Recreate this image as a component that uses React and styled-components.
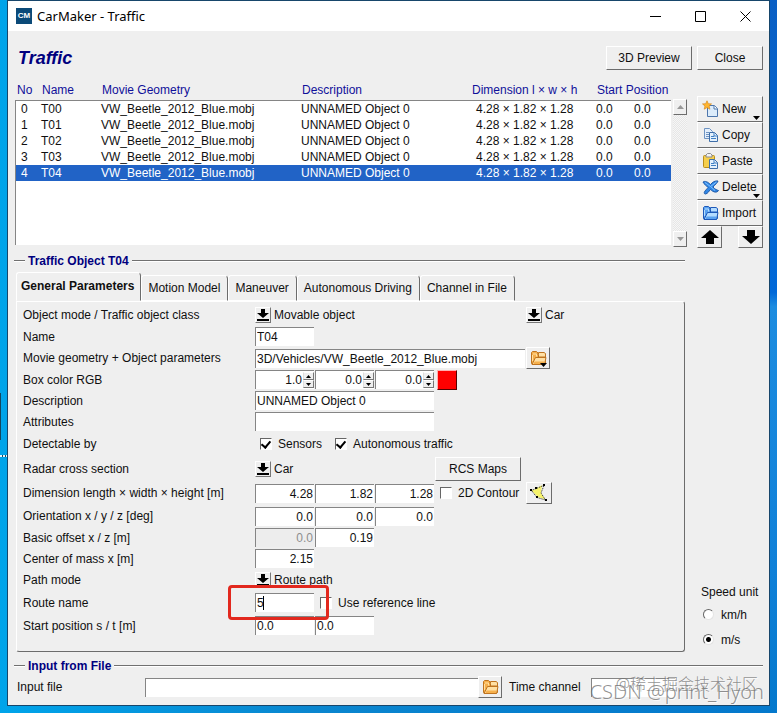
import React, { useState } from "react";
import styled, { createGlobalStyle } from "styled-components";

const GlobalStyle = createGlobalStyle`
  * {
    box-sizing: border-box;
  }
  body {
    margin: 0;
    font-family: "Liberation Sans", Arial, sans-serif;
    font-size: 12px;
    line-height: 14px;
    color: #101010;
  }
  button, input, select {
    font: inherit;
    color: inherit;
    margin: 0;
  }
`;
const Desktop = styled.div`
  position: relative;
  min-height: 100vh;
  display: flex;
  padding: 0 7px 7px;
  background: linear-gradient(
      180deg,
      #0a5fc4 0%,
      #0068d8 41%,
      #1c8ce0 43%,
      #0f80d8 80%,
      #0478cc 100%
    )
    right / 8px 100% no-repeat,
    linear-gradient(90deg, #00a4ea 0%, #0a86cf 40%, #0478cc 100%);
`;
const DesktopIcon = styled.div`
  position: absolute;
  left: 0;
  top: 393px;
  width: 1px;
  height: 47px;
  background: #14465f;
  &::after {
    content: "";
    position: absolute;
    left: 0;
    top: 62px;
    width: 7px;
    height: 2px;
    background: repeating-linear-gradient(90deg, #e8f4fa 0 2px, #14465f 2px 3px);
  }
`;
const Window = styled.div`
  position: relative;
  flex: 1;
  min-width: 0;
  border: 1px solid #17466b;
  background: #efefef;
`;
const TitleBar = styled.div`
  display: flex;
  align-items: center;
  height: 30px;
  padding: 0 8px;
  background: #fff;
  color: #000;
  font-family: "Noto Sans", "Open Sans", sans-serif;
  font-size: 13px;
`;
const AppIcon = styled.span`
  width: 16px;
  height: 16px;
  margin-right: 5px;
  background: #0b4a78;
  color: #fff;
  font: bold 8px/15px "Liberation Sans", Arial, sans-serif;
  text-align: center;
`;
const Caption = styled.span`
  flex: 1;
`;
const CaptionButton = styled.button`
  width: 45px;
  height: 30px;
  padding: 0;
  border: 0;
  background: none;
  display: grid;
  place-items: center;
`;
const CaptionButtons = styled.div`
  display: flex;
  margin-right: -7px;
`;
const Body = styled.div`
  padding: 0 6px 0 7px;
`;
const Header = styled.div`
  display: flex;
  align-items: center;
  gap: 5px;
  height: 53px;
`;
const Title = styled.h1`
  flex: 1;
  margin: 0;
  padding-left: 3px;
  color: #00007f;
  font-size: 18px;
  line-height: 20px;
  font-style: italic;
`;
const Button = styled.button`
  flex: none;
  display: flex;
  align-items: center;
  justify-content: center;
  width: ${(p) => p.$w}px;
  height: ${(p) => p.$h || 24}px;
  padding: 0;
  border: 1px solid;
  border-color: #fff #6c6c6c #6c6c6c #fff;
  background: #efefef;
  position: relative;
`;
const Columns = styled.div`
  display: flex;
  gap: 10px;
`;
const Main = styled.div`
  flex: 1;
  min-width: 0;
`;
const Side = styled.div`
  display: flex;
  flex-direction: column;
  width: 66px;
  padding-top: 12px;
`;
const ListArea = styled.div`
  display: flex;
  gap: 2px;
`;
const Table = styled.table`
  flex: 1;
  align-self: flex-start;
  table-layout: fixed;
  border-spacing: 0;
  th {
    height: 16px;
    padding: 0 0 4px 1px;
    color: #10109a;
    font-weight: normal;
    line-height: 12px;
    text-align: left;
    white-space: nowrap;
  }
  th:first-child {
    padding-left: 2px;
  }
  td {
    height: 16px;
    padding: 0;
    line-height: 16px;
    white-space: nowrap;
  }
  td:nth-child(5) {
    padding-left: 5px;
  }
  tbody tr:first-child td {
    height: 17px;
    border-top: 1px solid #858585;
  }
  tbody td:first-child {
    padding-left: 5px;
    border-left: 1px solid #858585;
  }
`;
const Tr = styled.tr`
  background: ${(p) => (p.$selected ? "#2163c6" : "#fff")};
  color: ${(p) => (p.$selected ? "#fff" : "#101010")};
`;
const Filler = styled.tr`
  background: #fff;
  && td {
    height: 64px;
  }
`;
const ScrollBar = styled.div`
  display: flex;
  flex-direction: column;
  justify-content: space-between;
  width: 14px;
  height: 148px;
  margin-top: 15px;
  background: repeating-conic-gradient(#e6e6e6 0 25%, #f6f6f6 0 50%) 0 0 / 2px
    2px;
`;
const ToolButton = styled(Button)`
  width: 100%;
  height: 26px;
  justify-content: flex-start;
  gap: 3px;
  padding-left: 4px;
`;
const MoreMark = styled.svg`
  position: absolute;
  right: 2px;
  bottom: 1px;
`;
const Arrows = styled.div`
  display: flex;
  justify-content: space-between;
`;
const SpeedUnit = styled.fieldset`
  margin: auto 0 0;
  padding: 0 0 0 4px;
  border: 0;
  white-space: nowrap;
  legend {
    padding: 0;
    line-height: 20px;
  }
`;
const RadioLabel = styled.label`
  display: flex;
  align-items: center;
  gap: 7px;
  height: 25px;
  padding-left: 2px;
`;
const Radio = styled.input`
  appearance: none;
  width: 11px;
  height: 11px;
  border: 1px solid;
  border-color: #666 #e4e4e4 #e4e4e4 #666;
  border-radius: 50%;
  background: #fff;
  &:checked {
    background: radial-gradient(#000 0 2px, #fff 3px);
  }
`;
const SectionTitle = styled.h2`
  display: flex;
  align-items: center;
  gap: 3px;
  height: 16px;
  margin: ${(p) => p.$top}px 0 0 -1px;
  color: #00007f;
  font-size: 12px;
  line-height: 16px;
  &::before,
  &::after {
    content: "";
    width: 11px;
    height: 1px;
    background: #707070;
    border-bottom: 1px solid #fff;
  }
  &::after {
    flex: 1;
    margin-right: ${(p) => p.$end || 0}px;
  }
`;
const Tabs = styled.div`
  display: flex;
  align-items: flex-end;
  height: 29px;
  margin-top: 3px;
  padding-left: 1px;
`;
const Tab = styled.button`
  height: ${(p) => (p.$active ? 29 : 26)}px;
  padding: ${(p) => (p.$active ? "0 6px 2px 4px" : "0 7px 0 6px")};
  border: 1px solid;
  border-color: #fff #6c6c6c ${(p) => (p.$active ? "#efefef" : "#fff")} #fff;
  border-radius: 3px 4px 0 0;
  background: #efefef;
  font-weight: ${(p) => (p.$active ? "bold" : "normal")};
  white-space: nowrap;
`;
const Panel = styled.div`
  margin: 0 2px 0 1px;
  padding: 2px 6px 15px;
  border: 1px solid;
  border-color: #fff #6c6c6c #6c6c6c #fff;
  border-radius: 0 3px 3px 3px;
`;
const Row = styled.div`
  display: flex;
  align-items: center;
  height: ${(p) => p.$h || 21}px;
`;
const RowLabel = styled.label`
  flex: none;
  width: 232px;
  white-space: nowrap;
`;
const Fields = styled.div`
  position: relative;
  display: flex;
  align-items: center;
  gap: 1px;
  flex: 1;
  min-width: 0;
`;
const Input = styled.input`
  width: ${(p) => p.$w || 59}px;
  height: 19px;
  padding: 0 1px;
  border: 0;
  border-top: 1px solid #858585;
  border-left: 1px solid #858585;
  border-radius: 0;
  outline: 0;
  background: #fff;
  text-align: ${(p) => (p.$num ? "right" : "left")};
  &:disabled {
    background: #ededed;
    color: #8e8e8e;
  }
`;
const GrowInput = styled(Input)`
  flex: 1;
  min-width: 0;
`;
const Spin = styled.div`
  display: flex;
  align-items: center;
  width: 59px;
  height: 19px;
  background: #fff;
  border-top: 1px solid #858585;
  border-left: 1px solid #858585;
  input {
    flex: 1;
    min-width: 0;
    height: 17px;
    border: 0;
    outline: 0;
    background: none;
  }
`;
const SpinButtons = styled.div`
  display: flex;
  flex-direction: column;
  button {
    display: grid;
    place-items: center;
    width: 11px;
    height: 8px;
    padding: 0;
    border: 1px solid;
    border-color: #fff #777 #777 #ddd;
    background: #efefef;
  }
`;
const Swatch = styled.button`
  width: 20px;
  height: 20px;
  margin-left: 2px;
  padding: 0;
  border: 1px solid;
  border-color: #ffb0b0 #500 #500 #ffb0b0;
  background: #f00;
`;
const Picker = styled.div`
  display: flex;
  align-items: center;
  gap: 3px;
  width: ${(p) => p.$w}px;
  select {
    appearance: none;
    padding: 0;
    border: 0;
    outline: 0;
    background: none;
  }
`;
const ArrowBox = styled.span`
  display: grid;
  place-items: center;
  width: 16px;
  height: 16px;
  border: 1px solid;
  border-color: #fff #777 #777 #fff;
`;
const CheckLabel = styled.label`
  display: flex;
  align-items: center;
  gap: 6px;
  margin: 0 ${(p) => p.$right || 0}px 0 ${(p) => p.$left}px;
  white-space: nowrap;
`;
const Check = styled.input`
  appearance: none;
  display: grid;
  place-items: center;
  width: 12px;
  height: 12px;
  border: 1px solid;
  border-color: #666 #fff #fff #666;
  background: #fff;
  &:checked::before {
    content: "";
    width: 4px;
    height: 7px;
    border: solid #000;
    border-width: 0 2px 2px 0;
    transform: translateY(-1px) rotate(40deg);
  }
`;
const Highlight = styled.div`
  position: absolute;
  z-index: 1;
  left: -27px;
  top: -8px;
  width: 101px;
  height: 35px;
  border: 3px solid #e2281e;
  border-radius: 4px;
  pointer-events: none;
`;
const Caret = styled.span`
  position: absolute;
  left: 8px;
  top: 3px;
  width: 1px;
  height: 14px;
  background: #000;
`;
const FileRow = styled.div`
  display: flex;
  align-items: center;
  height: 30px;
  padding: 0 88px 4px 2px;
  label {
    width: 128px;
  }
  label + input + button + label {
    width: 89px;
    padding-left: 7px;
    white-space: nowrap;
  }
`;
const Mark = styled.div`
  position: absolute;
  right: ${(p) => p.$right}px;
  bottom: ${(p) => p.$bottom}px;
  font-family: "Noto Sans", "Noto Sans CJK SC", sans-serif;
  font-size: ${(p) => p.$size}px;
  font-weight: 300;
  line-height: 24px;
  color: rgba(110, 110, 110, 0.75);
  text-shadow: 1px 1px 0 rgba(255, 255, 255, 0.7);
  white-space: nowrap;
  pointer-events: none;
`;

const NewIcon = () => (
  <svg width="17" height="18" viewBox="0 0 17 18">
    <path d="M5.5 5.5h7l3 3v8h-10z" fill="#dcecfb" stroke="#4d76ac" />
    <path d="M12 5.5v3.500h3.500" fill="#fff" stroke="#4d76ac" />
    <path
      d="M5 0.800l1.300 2.900 3.200.2-2.400 2.100.8 3.200L5 7.500 2.200 9.200 3 6 .5 3.900l3.200-.2z"
      fill="#ffb52e"
      stroke="#d98a1c"
      strokeWidth=".7"
    />
  </svg>
);
const CopyIcon = () => (
  <svg width="17" height="18" viewBox="0 0 17 18">
    <path d="M2.500 2.500h5l3 3v7h-8z" fill="#e4effb" stroke="#6e93c2" />
    <path d="M4 6.500h3M4 8.500h3M4 10.500h3" stroke="#6e93c2" />
    <path d="M7.500 6.500h5l3 3v6h-8z" fill="#e4f1fd" stroke="#3f6ea8" />
    <path d="M12 6.500v3.500h3.500M9 10.500h3M9 12.500h5" fill="none" stroke="#3f7fc4" />
  </svg>
);
const PasteIcon = () => (
  <svg width="17" height="18" viewBox="0 0 17 18">
    <rect x="1.500" y="3.500" width="11" height="12" rx="1" fill="#f6cf4c" stroke="#b98d1c" />
    <path d="M4 5V3l1.500-1.500h3L10 3v2z" fill="#f3f3f3" stroke="#8b8b8b" />
    <path d="M7.500 7.500h5l3 3v6h-8z" fill="#e4f1fd" stroke="#3f6ea8" />
    <path d="M12 7.500V11h3.500M9 11.500h3M9 13.500h5" fill="none" stroke="#3f7fc4" />
  </svg>
);
const DeleteIcon = () => (
  <svg width="17" height="18" viewBox="0 0 17 18">
    <path
      d="M1 4c2-1.500 5 0 7.500 2.500C10.500 4 13 2.500 16 3c-.5 2-3 3.500-5 6 2 2.500 4 3 5.500 3.500-1.500 2.500-5 2-8-1-2 2-2.500 4-5 4.500-1.500 0-1.500-1.500-1-2C3 12.500 5 11 6 9.500 4 7 2 6.500 1 4z"
      fill="#3187e6"
      stroke="#1f5aa8"
    />
    <path d="M3 4.500l5.500 4 6-4.500M8.500 8.500l4.500 4" fill="none" stroke="#7cc0ff" />
  </svg>
);
const FolderIcon = ({ dark, mid, light }) => (
  <svg width="17" height="16" viewBox="0 0 17 16">
    <path
      d="M1.500 13.500V2.500l1-1h4l1.500 1.500v2h7.500v8.500l-1 1H2.500z"
      fill={mid}
      stroke={dark}
    />
    <path d="M8.500 4.500v-2h5.500l1.500 1V7H8.500z" fill={light} stroke={dark} />
    <path d="M3 4h3.500v2.500M2.500 5v6" fill="none" stroke={light} />
    <path d="M5.500 7.500h10.500l-1.500 7H2z" fill={light} stroke={dark} />
    <path d="M4.500 11.500h10l-.5 2.500H3.500z" fill={mid} />
  </svg>
);
const ContourIcon = () => (
  <svg width="18" height="18" viewBox="0 0 18 18">
    <path d="M1.500 6.500L6 5l6-4-1 8 4.500 6.500L8 13z" fill="#f6f36c" />
    <path
      d="M1.500 6.500L6 4.500l8-3-3 7.500 4.500 7L7 13.500z"
      fill="none"
      stroke="#222"
      strokeDasharray="1 1"
    />
    <path d="M0 5h2v2H0zM5 3h2v2H5zM13 0h2v2h-2zM15 15h2v2h-2zM6 12h2v2H6z" />
  </svg>
);
const blueFolder = { dark: "#1d58b8", mid: "#5aa2f0", light: "#b4dcff" };
const goldFolder = { dark: "#bf7420", mid: "#f6b04c", light: "#ffe0a4" };

const Triangle = () => (
  <MoreMark width="7" height="4" viewBox="0 0 7 4" aria-hidden="true">
    <path d="M0 0h7L3.500 4z" />
  </MoreMark>
);
const BigArrow = ({ down }) => (
  <svg width="18" height="14" viewBox="0 0 18 14">
    <path d={down ? "M5 0h8v6h5L9 14 0 6h5z" : "M5 14h8V8h5L9 0 0 8h5z"} />
  </svg>
);
const ScrollArrow = ({ down }) => (
  <svg width="7" height="4" viewBox="0 0 7 4">
    <path d={down ? "M0 0h7L3.500 4z" : "M0 4h7L3.500 0z"} fill="#989898" />
  </svg>
);

const objects = ["T00", "T01", "T02", "T03", "T04"];
const tabs = [
  "General Parameters",
  "Motion Model",
  "Maneuver",
  "Autonomous Driving",
  "Channel in File"
];
const tools = [
  { name: "New", icon: <NewIcon />, more: true },
  { name: "Copy", icon: <CopyIcon /> },
  { name: "Paste", icon: <PasteIcon /> },
  { name: "Delete", icon: <DeleteIcon />, more: true },
  { name: "Import", icon: <FolderIcon {...blueFolder} /> }
];

function SpinField({ id, label, start }) {
  const [value, setValue] = useState(start);
  const step = (d) => setValue((Number(value) + d).toFixed(1));
  return (
    <Spin>
      <Input
        $num
        id={id}
        aria-label={label}
        value={value}
        onChange={(e) => setValue(e.target.value)}
      />
      <SpinButtons>
        <button aria-label={label + " up"} onClick={() => step(0.1)}>
          <svg width="5" height="3" viewBox="0 0 5 3">
            <path d="M0 3h5L2.500 0z" />
          </svg>
        </button>
        <button aria-label={label + " down"} onClick={() => step(-0.1)}>
          <svg width="5" height="3" viewBox="0 0 5 3">
            <path d="M0 0h5L2.500 3z" />
          </svg>
        </button>
      </SpinButtons>
    </Spin>
  );
}

function PickField({ id, label, value, w }) {
  return (
    <Picker $w={w}>
      <ArrowBox aria-hidden="true">
        <svg width="12" height="12" viewBox="0 0 12 12">
          <path d="M4 0h4v4h4L6 9 0 4h4zM0 10h12v2H0z" />
        </svg>
      </ArrowBox>
      <select id={id} aria-label={label} defaultValue={value}>
        <option>{value}</option>
      </select>
    </Picker>
  );
}

function Field({ label, id, h, children }) {
  return (
    <Row $h={h}>
      <RowLabel htmlFor={id}>{label}</RowLabel>
      <Fields>{children}</Fields>
    </Row>
  );
}

function ObjectList({ selected, onSelect }) {
  return (
    <ListArea>
      <Table>
        <colgroup>
          <col style={{ width: 26 }} />
          <col style={{ width: 60 }} />
          <col />
          <col style={{ width: 170 }} />
          <col style={{ width: 125 }} />
          <col style={{ width: 38 }} />
          <col style={{ width: 37 }} />
        </colgroup>
        <thead>
          <tr>
            <th>No</th>
            <th>Name</th>
            <th>Movie Geometry</th>
            <th>Description</th>
            <th>Dimension l × w × h</th>
            <th colSpan="2">Start Position</th>
          </tr>
        </thead>
        <tbody>
          {objects.map((name, i) => (
            <Tr key={name} $selected={selected === i} onClick={() => onSelect(i)}>
              <td>{i}</td>
              <td>{name}</td>
              <td>VW_Beetle_2012_Blue.mobj</td>
              <td>UNNAMED Object 0</td>
              <td>4.28 × 1.82 × 1.28</td>
              <td>0.0</td>
              <td>0.0</td>
            </Tr>
          ))}
          <Filler>
            <td colSpan="7"></td>
          </Filler>
        </tbody>
      </Table>
      <ScrollBar>
        <Button $w={14} $h={16} aria-label="Scroll up">
          <ScrollArrow />
        </Button>
        <Button $w={14} $h={16} aria-label="Scroll down">
          <ScrollArrow down />
        </Button>
      </ScrollBar>
    </ListArea>
  );
}

function GeneralParameters() {
  return (
    <Panel>
      <Field label="Object mode / Traffic object class" id="mode" h={22}>
        <PickField id="mode" value="Movable object" w={270} />
        <PickField label="Traffic object class" value="Car" w={100} />
      </Field>
      <Field label="Name" id="name">
        <Input id="name" defaultValue="T04" />
      </Field>
      <Field label="Movie geometry + Object parameters" id="geometry" h={22}>
        <Input $w={270} id="geometry" defaultValue="3D/Vehicles/VW_Beetle_2012_Blue.mobj" />
        <Button $w={24} $h={22} aria-label="Browse geometry">
          <FolderIcon {...goldFolder} />
          <Triangle />
        </Button>
      </Field>
      <Field label="Box color RGB" id="red">
        <SpinField id="red" label="Red" start="1.0" />
        <SpinField label="Green" start="0.0" />
        <SpinField label="Blue" start="0.0" />
        <Swatch aria-label="Pick color" />
      </Field>
      <Field label="Description" id="description">
        <Input $w={179} id="description" defaultValue="UNNAMED Object 0" />
      </Field>
      <Field label="Attributes" id="attributes">
        <Input $w={179} id="attributes" />
      </Field>
      <Field label="Detectable by" id="sensors" h={24}>
        <CheckLabel $left={5}>
          <Check type="checkbox" id="sensors" defaultChecked />
          Sensors
        </CheckLabel>
        <CheckLabel $left={12}>
          <Check type="checkbox" defaultChecked />
          Autonomous traffic
        </CheckLabel>
      </Field>
      <Field label="Radar cross section" id="radar" h={25}>
        <PickField id="radar" value="Car" w={179} />
        <Button $w={86}>RCS Maps</Button>
      </Field>
      <Field label="Dimension length × width × height [m]" id="length" h={24}>
        <Input $num id="length" defaultValue="4.28" />
        <Input $num aria-label="Width" defaultValue="1.82" />
        <Input $num aria-label="Height" defaultValue="1.28" />
        <CheckLabel $left={5} $right={6}>
          <Check type="checkbox" />
          2D Contour
        </CheckLabel>
        <Button $w={26} $h={22} aria-label="Edit contour">
          <ContourIcon />
        </Button>
      </Field>
      <Field label="Orientation x / y / z [deg]" id="rotx" h={22}>
        <Input $num id="rotx" defaultValue="0.0" />
        <Input $num aria-label="Orientation y" defaultValue="0.0" />
        <Input $num aria-label="Orientation z" defaultValue="0.0" />
      </Field>
      <Field label="Basic offset x / z [m]" id="offx">
        <Input $num id="offx" defaultValue="0.0" disabled />
        <Input $num aria-label="Offset z" defaultValue="0.19" />
      </Field>
      <Field label="Center of mass x [m]" id="mass">
        <Input $num id="mass" defaultValue="2.15" />
      </Field>
      <Field label="Path mode" id="path">
        <PickField id="path" value="Route path" w={120} />
      </Field>
      <Field label="Route name" id="route" h={25}>
        <Input id="route" defaultValue="5" />
        <CheckLabel $left={5}>
          <Check type="checkbox" />
          Use reference line
        </CheckLabel>
        <Caret />
        <Highlight />
      </Field>
      <Field label="Start position s / t [m]" id="start">
        <Input id="start" defaultValue="0.0" />
        <Input aria-label="Start position t" defaultValue="0.0" />
      </Field>
    </Panel>
  );
}

export default function App() {
  const [selected, setSelected] = useState(4);
  const [tab, setTab] = useState(tabs[0]);
  const [unit, setUnit] = useState("m/s");
  return (
    <Desktop>
      <GlobalStyle />
      <DesktopIcon />
      <Window>
        <TitleBar>
          <AppIcon>CM</AppIcon>
          <Caption>CarMaker - Traffic</Caption>
          <CaptionButtons>
            <CaptionButton aria-label="Minimize">
              <svg width="11" height="11" viewBox="0 0 11 11">
                <path d="M0 5.500h11" stroke="#000" />
              </svg>
            </CaptionButton>
            <CaptionButton aria-label="Maximize">
              <svg width="11" height="11" viewBox="0 0 11 11">
                <path d="M.5.5h10v10H.5z" fill="none" stroke="#000" />
              </svg>
            </CaptionButton>
            <CaptionButton aria-label="Close window">
              <svg width="11" height="11" viewBox="0 0 11 11">
                <path d="M.5.5l10 10M10.500.5l-10 10" stroke="#000" />
              </svg>
            </CaptionButton>
          </CaptionButtons>
        </TitleBar>
        <Body>
          <Header>
            <Title>Traffic</Title>
            <Button $w={86}>3D Preview</Button>
            <Button $w={66}>Close</Button>
          </Header>
          <Columns>
            <Main>
              <ObjectList selected={selected} onSelect={setSelected} />
              <SectionTitle $top={6} $end={2}>
                Traffic Object {objects[selected]}
              </SectionTitle>
              <Tabs role="tablist">
                {tabs.map((t) => (
                  <Tab
                    key={t}
                    role="tab"
                    aria-selected={t === tab}
                    $active={t === tab}
                    onClick={() => setTab(t)}
                  >
                    {t}
                  </Tab>
                ))}
              </Tabs>
              <GeneralParameters />
            </Main>
            <Side>
              {tools.map((t) => (
                <ToolButton key={t.name}>
                  {t.icon}
                  {t.name}
                  {t.more ? <Triangle /> : null}
                </ToolButton>
              ))}
              <Arrows>
                <Button $w={25} $h={22} aria-label="Move up">
                  <BigArrow />
                </Button>
                <Button $w={25} $h={22} aria-label="Move down">
                  <BigArrow down />
                </Button>
              </Arrows>
              <SpeedUnit>
                <legend>Speed unit</legend>
                {["km/h", "m/s"].map((u) => (
                  <RadioLabel key={u}>
                    <Radio
                      type="radio"
                      name="unit"
                      checked={unit === u}
                      onChange={() => setUnit(u)}
                    />
                    {u}
                  </RadioLabel>
                ))}
              </SpeedUnit>
            </Side>
          </Columns>
          <SectionTitle $top={6}>Input from File</SectionTitle>
          <FileRow>
            <label htmlFor="file">Input file</label>
            <GrowInput id="file" />
            <Button $w={24} $h={22} aria-label="Browse input file">
              <FolderIcon {...goldFolder} />
            </Button>
            <label htmlFor="channel">Time channel</label>
            <Input $w={84} id="channel" />
          </FileRow>
        </Body>
        <Mark $right={11} $bottom={9} $size={16}>
          @稀土掘金技术社区
        </Mark>
        <Mark $right={5} $bottom={1} $size={20}>
          CSDN @print_Hyon
        </Mark>
      </Window>
    </Desktop>
  );
}
